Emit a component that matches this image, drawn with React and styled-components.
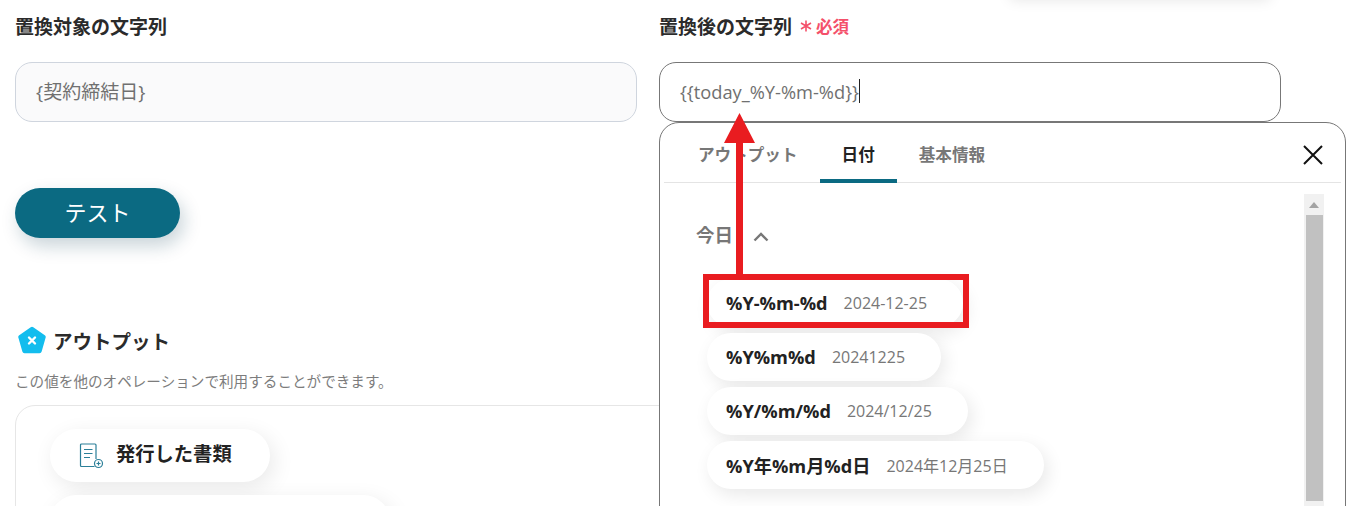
import React from 'react';
import styled, { createGlobalStyle } from 'styled-components';

const FONT = '"Open Sans", "Noto Sans CJK JP", sans-serif';
const TEAL = '#0b6a82';

const GlobalStyle = createGlobalStyle`
  html, body {
    margin: 0;
    padding: 0;
    background: #fff;
    overflow: hidden;
  }
  * {
    box-sizing: border-box;
  }
`;

const Page = styled.div`
  position: relative;
  width: 1357px;
  height: 506px;
  overflow: hidden;
  display: grid;
  grid-template-columns: 622px 687px;
  column-gap: 22px;
  padding: 15px 0 0 15px;
  font-family: ${FONT};
  color: #222;
`;

const TopShadow = styled.div`
  position: absolute;
  top: -30px;
  left: 1010px;
  width: 260px;
  height: 30px;
  box-shadow: 0 0 14px rgba(0, 0, 0, 0.1);
`;

const Column = styled.div`
  display: flex;
  flex-direction: column;
  min-width: 0;
`;

const Label = styled.div`
  display: flex;
  align-items: center;
  gap: 8px;
  height: 22px;
  font-size: 19px;
  font-weight: 700;
  color: #2b2b2b;
`;

const Required = styled.span`
  display: flex;
  align-items: center;
  gap: 4px;
  font-size: 16.5px;
  font-weight: 700;
  color: #f4506a;
`;

const Field = styled.div`
  display: flex;
  align-items: center;
  margin-top: 25px;
  width: 622px;
  height: 60px;
  padding: 0 20px 2px;
  font-size: ${({ active }) => (active ? '18.3px' : '19px')};
  border-radius: 17px;
  border: 1px solid ${({ active }) => (active ? '#777' : '#cfd5de')};
  background: ${({ active }) => (active ? '#fff' : '#fafafb')};
  color: #707070;
`;

const Caret = styled.span`
  display: inline-block;
  width: 1px;
  height: 24px;
  background: #222;
`;

const TestButton = styled.button`
  display: block;
  margin-top: 66px;
  width: 165px;
  height: 50px;
  padding: 0 0 4px;
  border: 0;
  border-radius: 25px;
  background: ${TEAL};
  color: #fff;
  font-family: ${FONT};
  font-size: 22px;
  box-shadow: 4px 8px 18px rgba(11, 60, 80, 0.22);
`;

const OutputHeading = styled.div`
  display: flex;
  align-items: center;
  gap: 7px;
  margin: 88px 0 0 3px;
  height: 28px;
  font-size: 19.5px;
  font-weight: 700;
  color: #2b2b2b;
`;

const OutputNote = styled.div`
  margin-top: 17px;
  height: 20px;
  font-size: 14.6px;
  line-height: 20px;
  color: #7c7c7c;
`;

const OutputCard = styled.div`
  display: flex;
  flex-direction: column;
  align-items: flex-start;
  gap: 13px;
  margin-top: 14px;
  width: 900px;
  height: 160px;
  padding: 23px 34px;
  border: 1px solid #e6e6e6;
  border-radius: 20px;
`;

const OutputPill = styled.div`
  display: flex;
  align-items: center;
  gap: 12px;
  flex-shrink: 0;
  width: ${({ wide }) => (wide ? '340px' : '220px')};
  height: 53px;
  padding: 0 0 5px 28px;
  border-radius: 27px;
  background: #fff;
  font-size: 19.3px;
  font-weight: 700;
  box-shadow: 4px 6px 22px rgba(0, 0, 0, 0.09);
`;

const PillIcon = styled.span`
  display: flex;
  margin-top: 5px;
`;

const Panel = styled.div`
  position: relative;
  z-index: 1;
  width: 687px;
  height: 500px;
  padding: 0 4px;
  border: 1px solid #777;
  border-radius: 20px;
  background: #fff;
`;

const TabBar = styled.div`
  display: flex;
  align-items: stretch;
  justify-content: space-between;
  height: 60px;
  border-bottom: 1px solid #e4e4e4;
`;

const TabList = styled.div`
  display: flex;
  padding-left: 12px;
`;

const Tab = styled.div`
  display: flex;
  align-items: center;
  justify-content: center;
  padding: 8px 22px 0;
  margin-bottom: -1px;
  font-size: 16.6px;
  font-weight: 700;
  color: ${({ active }) => (active ? '#222' : '#777')};
  border-bottom: 4px solid ${({ active }) => (active ? TEAL : 'transparent')};
  border-radius: 4px 4px 0 0;
  line-height: 22px;
`;

const CloseButton = styled.div`
  display: flex;
  align-items: center;
  margin: 4px 17px 0 0;
`;

const PanelBody = styled.div`
  display: flex;
  justify-content: space-between;
  padding: 11px 17px 0 32px;
`;

const List = styled.div`
  display: flex;
  flex-direction: column;
  align-items: flex-start;
  padding-top: 28px;
`;

const SectionTitle = styled.div`
  display: flex;
  align-items: center;
  gap: 20px;
  margin-bottom: 33px;
  height: 24px;
  font-size: 18.5px;
  font-weight: 700;
  color: #777;
`;

const ChevronSlot = styled.span`
  display: flex;
  margin-top: 5px;
`;

const DatePills = styled.div`
  display: flex;
  flex-direction: column;
  gap: 6px;
  margin-left: 11px;
`;

const DatePill = styled.div`
  display: inline-flex;
  align-self: flex-start;
  align-items: center;
  gap: 16px;
  height: 48px;
  padding: 0 36px 0 19px;
  border-radius: 24px;
  background: #fff;
  box-shadow: 4px 6px 18px rgba(0, 0, 0, 0.09);
`;

const Format = styled.span`
  font-size: 18.2px;
  font-weight: 700;
  color: #222;
`;

const Sample = styled.span`
  font-size: 16px;
  color: #777;
`;

const Scrollbar = styled.div`
  display: flex;
  flex-direction: column;
  align-items: center;
  width: 20px;
  height: 320px;
  background: #f1f1f1;
`;

const ScrollArrow = styled.div`
  width: 0;
  height: 0;
  margin: 8px 0 7px;
  border-left: 5px solid transparent;
  border-right: 5px solid transparent;
  border-bottom: 6px solid #a3a3a3;
`;

const ScrollThumb = styled.div`
  width: 17px;
  height: 286px;
  background: #c1c1c1;
`;

const ArrowOverlay = styled.svg`
  position: absolute;
  z-index: 2;
  left: 720px;
  top: 110px;
`;

const Highlight = styled.div`
  position: absolute;
  z-index: 2;
  left: 703px;
  top: 274px;
  width: 266px;
  height: 54px;
  border: 6px solid #e91c20;
`;

const PentagonIcon = () => (
  <svg width="28" height="28" viewBox="0 0 28 28">
    <path
      d="M14 3 L25.5 11 L21.5 25 L6.5 25 L2.5 11 Z"
      fill="#13bdee"
      stroke="#13bdee"
      strokeWidth="4.5"
      strokeLinejoin="round"
    />
    <path d="M11 11.5 L17 17.5 M17 11.5 L11 17.5" stroke="#fff" strokeWidth="2.4" strokeLinecap="round" />
  </svg>
);

const DocumentIcon = () => (
  <svg width="26" height="26" viewBox="0 0 26 26" fill="none" stroke="#2b7f98" strokeWidth="1.2">
    <path d="M16.5 23.5 H3.5 A1 1 0 0 1 2.5 22.5 V2 A1 1 0 0 1 3.5 1 H17 A1 1 0 0 1 18 2 V16" />
    <path d="M6 6.5 H14.5 M6 10.5 H14.5 M6 14.5 H12" />
    <circle cx="20.5" cy="20.5" r="4" fill="#fff" />
    <path d="M18.5 20.5 H22.5 M20.5 18.5 V22.5" />
  </svg>
);

const CloseIcon = () => (
  <svg width="22" height="22" viewBox="0 0 22 22" stroke="#111" strokeWidth="2" fill="none">
    <path d="M2 2 L20 20 M20 2 L2 20" />
  </svg>
);

const ChevronUp = () => (
  <svg width="16" height="10" viewBox="0 0 16 10" stroke="#777" strokeWidth="2.4" fill="none">
    <path d="M1.5 8.5 L8 2 L14.5 8.5" />
  </svg>
);

const Asterisk = () => (
  <svg width="12" height="12" viewBox="0 0 12 12" stroke="#f4506a" strokeWidth="1.6" fill="none">
    <path d="M6 0.5 V11.5 M1 3 L11 9 M11 3 L1 9" />
  </svg>
);

const dateFormats = [
  { format: '%Y-%m-%d', sample: '2024-12-25' },
  { format: '%Y%m%d', sample: '20241225' },
  { format: '%Y/%m/%d', sample: '2024/12/25' },
  { format: '%Y年%m月%d日', sample: '2024年12月25日' },
];

const App = () => (
  <Page>
    <GlobalStyle />
    <TopShadow />
    <Column>
      <Label>置換対象の文字列</Label>
      <Field>{'{契約締結日}'}</Field>
      <TestButton>テスト</TestButton>
      <OutputHeading>
        <PentagonIcon />
        アウトプット
      </OutputHeading>
      <OutputNote>この値を他のオペレーションで利用することができます。</OutputNote>
      <OutputCard>
        <OutputPill>
          <PillIcon>
            <DocumentIcon />
          </PillIcon>
          発行した書類
        </OutputPill>
        <OutputPill wide />
      </OutputCard>
    </Column>
    <Column>
      <Label>
        置換後の文字列
        <Required>
          <Asterisk />
          必須
        </Required>
      </Label>
      <Field active>
        {'{{today_%Y-%m-%d}}'}
        <Caret />
      </Field>
      <Panel>
        <TabBar>
          <TabList>
            <Tab>アウトプット</Tab>
            <Tab active>日付</Tab>
            <Tab>基本情報</Tab>
          </TabList>
          <CloseButton>
            <CloseIcon />
          </CloseButton>
        </TabBar>
        <PanelBody>
          <List>
            <SectionTitle>
              今日
              <ChevronSlot>
                <ChevronUp />
              </ChevronSlot>
            </SectionTitle>
            <DatePills>
              {dateFormats.map(({ format, sample }) => (
                <DatePill key={format}>
                  <Format>{format}</Format>
                  <Sample>{sample}</Sample>
                </DatePill>
              ))}
            </DatePills>
          </List>
          <Scrollbar>
            <ScrollArrow />
            <ScrollThumb />
          </Scrollbar>
        </PanelBody>
      </Panel>
    </Column>
    <ArrowOverlay width="40" height="170" viewBox="0 0 40 170">
      <path d="M19.5 3 L35 33 L23 33 L23 166 L16 166 L16 33 L4 33 Z" fill="#e91c20" />
    </ArrowOverlay>
    <Highlight />
  </Page>
);

export default App;
